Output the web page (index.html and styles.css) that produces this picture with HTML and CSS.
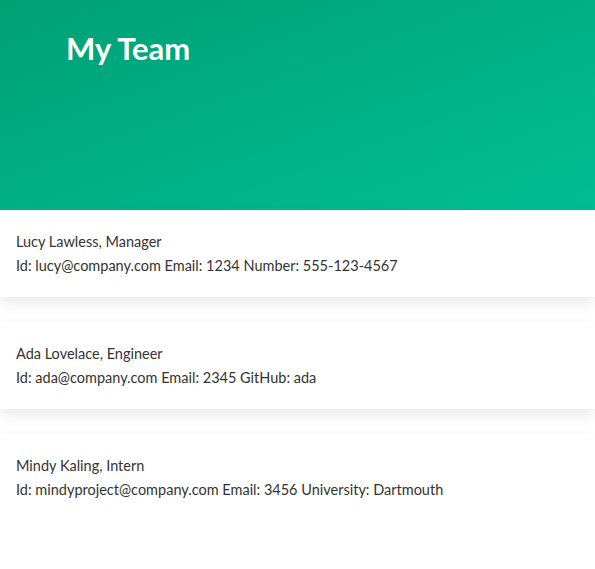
FILE: index.html
```html
<!DOCTYPE html>
<html>
<head>
<meta charset="utf-8">
<link rel="stylesheet" href="styles.css">
</head>
<body>
<header class="hero">
  <h1 class="hero-title">My Team</h1>
</header>
<main class="team">
  <section class="card">
    <p class="card-line">Lucy Lawless, Manager</p>
    <p class="card-line">Id: lucy@company.com Email: 1234 Number: 555-123-4567</p>
  </section>
  <section class="card">
    <p class="card-line">Ada Lovelace, Engineer</p>
    <p class="card-line">Id: ada@company.com Email: 2345 GitHub: ada</p>
  </section>
  <section class="card">
    <p class="card-line">Mindy Kaling, Intern</p>
    <p class="card-line">Id: mindyproject@company.com Email: 3456 University: Dartmouth</p>
  </section>
</main>
</body>
</html>
```
FILE: styles.css
```css
html, body {
  margin: 0;
  padding: 0;
  background: #ffffff;
}
body {
  font-family: Lato, "Noto Sans", sans-serif;
  color: #333333;
}
.hero {
  height: 210px;
  box-sizing: border-box;
  padding: 29px 66px 0;
  background: linear-gradient(160deg, #00a073 0%, #00b085 50%, #00be94 100%);
}
.hero-title {
  margin: 0;
  color: #ffffff;
  font-size: 31px;
  font-weight: 700;
  line-height: 38px;
}
.team {
  display: flex;
  flex-direction: column;
  gap: 25px;
}
.card {
  background: #ffffff;
  height: 87px;
  box-sizing: border-box;
  padding: 20px 16px 0;
  box-shadow: 0 6px 14px rgba(0, 0, 0, 0.09);
}
.card-line {
  margin: 0;
  font-size: 14.5px;
  line-height: 24px;
}
```
